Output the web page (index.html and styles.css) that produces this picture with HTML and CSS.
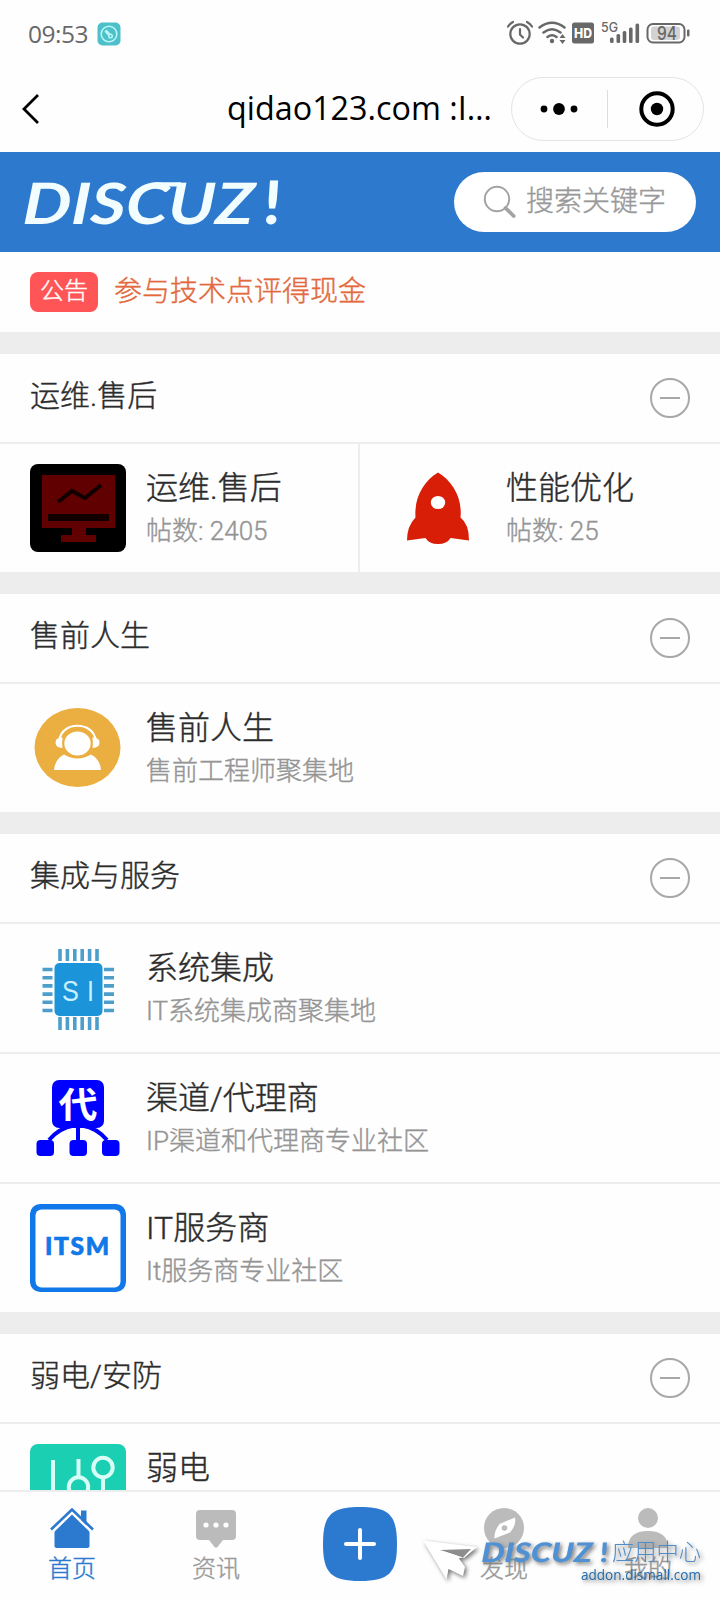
FILE: index.html
```html
<!DOCTYPE html>
<html lang="zh-CN">
<head>
<meta charset="utf-8">
<title>Discuz!</title>
<link rel="stylesheet" href="styles.css">
</head>
<body>
<div class="screen">
  <div class="status">
    <span class="clock">09:53</span>
    <svg class="app-dot" width="24" height="24" viewBox="0 0 24 24"><rect x=".5" y=".5" width="23" height="23" rx="5" fill="#4dc0ca"/><circle cx="12" cy="12" r="7.800" fill="none" stroke="#b9f6f8" stroke-width="1.600"/><path d="M8.500 8.500l4 4.500" stroke="#b9f6f8" stroke-width="3"/><circle cx="13.500" cy="14" r="1.800" fill="none" stroke="#b9f6f8" stroke-width="1.500"/></svg>
    <svg class="status-icons" width="190" height="28" viewBox="504 20 190 28">
      <g fill="none" stroke="#686868" stroke-width="2.200" stroke-linecap="round">
        <circle cx="520" cy="34" r="9.700"/><path d="M520 29v5.500l3 3M508 26.500q2-3 5-4.500M532 26.500q-2-3-5-4.500"/>
        <path d="M539.500 27.500q12.500-9.500 25 0M543.500 32.500q8.500-6.500 17 0M547.500 37q4.500-3.500 9 0" stroke-width="2.500"/>
        <rect x="647.500" y="24" width="37" height="18.500" rx="5.500" stroke-width="2"/>
      </g>
      <g fill="#686868">
        <circle cx="552" cy="41" r="2.200"/><path d="M559.500 38l3-4 3 4zM559.500 40l3 4 3-4z"/>
        <rect x="572" y="22.500" width="22" height="21" rx="2.500"/>
        <rect x="610" y="37.500" width="3.600" height="5.500" rx="1.500"/><rect x="616.500" y="34" width="3.600" height="9" rx="1.500"/><rect x="622.700" y="31" width="3.600" height="12" rx="1.500"/><rect x="629" y="27.500" width="3.600" height="15.500" rx="1.500"/><rect x="635.500" y="23.500" width="3.600" height="19.500" rx="1.500"/>
        <rect x="687" y="29.500" width="2.500" height="7" rx="1"/>
      </g>
      <rect x="651" y="26.500" width="29" height="13.500" rx="3" fill="#d2d2d2"/>
      <text class="st hd" x="574" y="38" textLength="18" lengthAdjust="spacingAndGlyphs">HD</text>
      <text class="st g5" x="601" y="31.500" textLength="17" lengthAdjust="spacingAndGlyphs">5G</text>
      <text class="st bat" x="657" y="39.500" textLength="20" lengthAdjust="spacingAndGlyphs">94</text>
    </svg>
  </div>
  <div class="nav">
    <svg class="back" width="20" height="34" viewBox="0 0 20 34"><path d="M17 3L3 17l14 14" fill="none" stroke="#000" stroke-width="2.800"/></svg>
    <svg class="nav-title" width="276" height="50" viewBox="222 84 276 50"><text x="227" y="120" textLength="265" lengthAdjust="spacingAndGlyphs">qidao123.com :I…</text></svg>
    <div class="capsule">
      <svg width="38" height="12" viewBox="0 0 38 12"><circle cx="4" cy="6" r="3.400"/><circle cx="19" cy="6" r="5.900"/><circle cx="34" cy="6" r="3.400"/></svg>
      <i></i>
      <svg width="36" height="36" viewBox="0 0 36 36"><circle cx="18" cy="18" r="15.700" fill="none" stroke="#000" stroke-width="4"/><circle cx="18" cy="18" r="6.200"/></svg>
    </div>
  </div>
  <div class="header">
    <svg class="brand" width="270" height="72" viewBox="16 168 270 72"><text class="logo" transform="translate(22 223.500) skewX(-3)" textLength="231" lengthAdjust="spacingAndGlyphs">DISCUZ</text><path d="M155 182.300h26l-1.500 4.200h-25z" fill="#f2fdff"/><text class="bang" transform="translate(262 223.500) skewX(-4)" textLength="18" lengthAdjust="spacingAndGlyphs">!</text></svg>
    <div class="search">
      <svg width="34" height="34" viewBox="0 0 34 34" fill="none" stroke="#a3a3a3"><circle cx="14" cy="14" r="12.200" stroke-width="2"/><path d="M22.500 23l8.200 8" stroke-width="3.800" stroke-linecap="round"/></svg>
      <span>搜索关键字</span>
    </div>
  </div>
  <div class="notice"><span class="badge">公告</span><span class="notice-text">参与技术点评得现金</span></div>

  <div class="forums">
    <section>
      <div class="head"><span>运维.售后</span><i class="fold"></i></div>
      <div class="row split">
        <div class="cell">
          <svg class="icon" viewBox="0 0 96 88"><rect width="96" height="88" fill="#000"/><path d="M12 11h73v53H12zM42 64h14v7h10v7H31v-7h11z" fill="#600000"/><path d="M18 50h61v7H18z" fill="#120000"/><path d="M28 38l14-11 13 7 16-13" fill="none" stroke="#120000" stroke-width="4"/></svg>
          <div class="info"><b>运维.售后</b><small>帖数: 2405</small></div>
        </div>
        <div class="cell">
          <svg class="icon" viewBox="0 0 96 88"><path d="M48 8.500C62 17 72.500 33 70.500 53.500Q79 60 79 76.500L60.500 74Q57 80 48 80t-12.500-6L17 76.500Q17 62 25.500 53.500C24 33 34 17 48 8.500z" fill="#d81e06"/><ellipse cx="48" cy="38.500" rx="7.200" ry="6.600" fill="#fff"/></svg>
          <div class="info"><b>性能优化</b><small>帖数: 25</small></div>
        </div>
      </div>
    </section>
    <section>
      <div class="head"><span>售前人生</span><i class="fold"></i></div>
      <div class="row"><div class="cell">
        <svg class="icon" viewBox="0 0 96 88"><ellipse cx="47.500" cy="43.500" rx="43" ry="39.500" fill="#ebae40"/><path d="M29.500 36c2-19 34-19 36 0" fill="none" stroke="#fff" stroke-width="2.200"/><path d="M32.500 33.500v10.500q-7-.5-7-5.500t7-5zM62.500 33.500v10.500q7-.5 7-5.500t-7-5zM24 66q1-11 10-15.500 13.500 8 27 0Q70 55 71 66z" fill="#fff"/><ellipse cx="47.500" cy="39.500" rx="14.200" ry="13" fill="#fff" stroke="#ebae40" stroke-width="2"/></svg>
        <div class="info"><b>售前人生</b><small>售前工程师聚集地</small></div>
      </div></div>
    </section>
    <section>
      <div class="head"><span>集成与服务</span><i class="fold"></i></div>
      <div class="row"><div class="cell">
        <svg class="icon" viewBox="0 0 96 88"><path d="M30 5v12M37.400 5v12M44.800 5v12M52.200 5v12M59.600 5v12M67 5v12M30 73v13M37.400 73v13M44.800 73v13M52.200 73v13M59.600 73v13M67 73v13M12.500 25.500h10M12.500 33.700h10M12.500 41.900h10M12.500 50.100h10M12.500 58.300h10M12.500 66.500h10M74 25.500h10M74 33.700h10M74 41.900h10M74 50.100h10M74 58.300h10M74 66.500h10" stroke="#4c9fcb" stroke-width="3.600"/><rect x="24.500" y="19" width="48" height="53" rx="5" fill="#1b94d9"/><text class="si" transform="translate(32 56.500) scale(.9 1.080)">S</text><text class="si" transform="translate(57 56.500) scale(.9 1.080)">I</text></svg>
        <div class="info"><b>系统集成</b><small>IT系统集成商聚集地</small></div>
      </div></div>
      <div class="row"><div class="cell">
        <svg class="icon" viewBox="0 0 96 88"><path d="M48 50v16M19 66q10-12 25-14.500M77 66Q67 54 52 51.500" fill="none" stroke="#0000fe" stroke-width="4"/><g fill="#0000fe"><rect x="22" y="6" width="52" height="48" rx="7"/><rect x="6.500" y="66" width="17.500" height="16" rx="4"/><rect x="39.500" y="66" width="17.500" height="16" rx="4"/><rect x="72" y="66" width="17.500" height="16" rx="4"/></g><text class="dai" transform="translate(28.500 43.500) scale(1 .92)">代</text></svg>
        <div class="info"><b>渠道/代理商</b><small>IP渠道和代理商专业社区</small></div>
      </div></div>
      <div class="row"><div class="cell">
        <svg class="icon" viewBox="0 0 96 88"><rect width="96" height="88" rx="10" fill="#1078e8"/><rect x="5.500" y="5.500" width="85" height="78" rx="6" fill="#fff"/><text class="itsm" x="15" y="51" textLength="64" lengthAdjust="spacing">ITSM</text></svg>
        <div class="info"><b>IT服务商</b><small>It服务商专业社区</small></div>
      </div></div>
    </section>
    <section>
      <div class="head"><span>弱电/安防</span><i class="fold"></i></div>
      <div class="row"><div class="cell">
        <svg class="icon" viewBox="0 0 96 88"><rect width="96" height="88" fill="#1bcfb2"/><g fill="none" stroke="#d8fff6" stroke-width="4"><path d="M23 16v60M48.500 15v18M73 33v50"/><circle cx="48.500" cy="43" r="9.700"/><circle cx="73" cy="23.500" r="9.700"/></g></svg>
        <div class="info single"><b>弱电</b></div>
      </div></div>
    </section>
  </div>

  <div class="tabs">
    <div class="tab on"><svg width="44" height="40" viewBox="0 0 44 40"><path d="M31 2.500h5.500v15L31 12z" fill="#2c79d0"/><path d="M1 21.500L22 1.500l21 20" fill="none" stroke="#2c79d0" stroke-width="2.600"/><path d="M4.500 23L22 6l17.500 17v15q0 2-3 2h-29q-3 0-3-2z" fill="#2c79d0"/><path d="M2.500 24.500L22 5.500l19.500 19" fill="none" stroke="#fff" stroke-width="1.500"/></svg><span>首页</span></div>
    <div class="tab"><svg width="44" height="40" viewBox="0 0 44 40"><path d="M6 2h32q4 0 4 4v22q0 4-4 4h-9l-5.500 7q-1.500 1.500-3 0L15 32H6q-4 0-4-4V6q0-4 4-4z" fill="#bbb"/><g fill="#fff"><circle cx="12" cy="17" r="2.600"/><circle cx="22" cy="17" r="2.600"/><circle cx="32" cy="17" r="2.600"/></g></svg><span>资讯</span></div>
    <div class="tab"><svg class="plus" width="76" height="76" viewBox="0 0 76 76"><path d="M38 1c29 0 37 8 37 37s-8 37-37 37S1 67 1 38 9 1 38 1z" fill="#2c79d0"/><path d="M24 38h28M38 24v28" stroke="#fff" stroke-width="4" stroke-linecap="round"/></svg></div>
    <div class="tab"><svg width="44" height="40" viewBox="0 0 44 40"><circle cx="22" cy="20" r="20" fill="#bbb"/><path d="M33 9.500q1.500 8-5 15L12.500 30.500Q12 23 17.500 16z" fill="#fff"/><circle cx="22.500" cy="20" r="2.800" fill="#bbb"/></svg><span>发现</span></div>
    <div class="tab"><svg width="44" height="40" viewBox="0 0 44 40"><circle cx="22" cy="10" r="10" fill="#bbb"/><path d="M2 40q0-17 20-17t20 17z" fill="#bbb"/></svg><span>我的</span></div>
    <svg class="mark" width="300" height="60" viewBox="420 1534 300 60">
      <g class="shade"><path d="M423 1540.500l54 6.500-13 11-7.500-3L465 1567l-2 9-14.500-7-2 10.500z" fill="#fff"/><path d="M440 1550l31-1-8 8.500z" fill="#8d8d8d"/><path d="M440 1550l23 7.500-5 1z" fill="#fff"/></g>
      <g class="shade"><text class="mark-logo" transform="translate(481 1562) skewX(-3)" textLength="111" lengthAdjust="spacingAndGlyphs">DISCUZ</text><text class="mark-bang" transform="translate(599 1562) skewX(-4)" textLength="9" lengthAdjust="spacingAndGlyphs">!</text>
      <text class="mark-cn" x="612" y="1560" textLength="89" lengthAdjust="spacingAndGlyphs">应用中心</text>
      <text class="mark-url" x="581" y="1580" textLength="120" lengthAdjust="spacingAndGlyphs">addon.dismall.com</text></g>
    </svg>
  </div>
</div>
</body>
</html>
```

FILE: styles.css
```css
* { box-sizing: border-box; }
body { margin: 0; background: #fff; font-family: Roboto, "Noto Sans CJK SC", sans-serif; font-weight: 300; color: #2c2c2c; -webkit-text-stroke: .4px; }
svg { display: block; flex: none; }
svg text { -webkit-text-stroke: 0; }
.screen { width: 720px; height: 1600px; display: flex; flex-direction: column; overflow: hidden; background: #fefefe; }
.status { height: 66px; flex: none; display: flex; align-items: center; padding: 2px 26px 0 28px; }
.clock { font-family: "Open Sans", sans-serif; font-weight: 400; font-size: 24.5px; line-height: 30px; width: 69px; padding-bottom: 1px; color: #686868; letter-spacing: -.5px; -webkit-text-stroke: 0; }
.status-icons { margin-left: auto; }
.st { font-family: Inter, sans-serif; fill: #686868; }
.hd { font-size: 13px; font-weight: 800; fill: #fff; }
.g5 { font-size: 13px; font-weight: 500; }
.bat { font-size: 18px; font-weight: 500; }
.nav { height: 86px; flex: none; display: flex; align-items: center; padding: 0 16px 1px 21px; }
.nav-title { margin-left: 181px; }
.nav-title text { font-family: "Open Sans", sans-serif; font-size: 32px; font-weight: 400; fill: #000; }
.capsule { margin-left: auto; width: 193px; height: 64px; border: 1px solid #e4e4e4; border-radius: 32px; display: flex; align-items: center; padding: 0 27px 0 28px; }
.capsule i { width: 1px; height: 38px; background: #ddd; margin: 0 31px 0 29px; }
.header { height: 100px; flex: none; background: #2c79ce; display: flex; align-items: center; padding: 4px 24px 0 16px; }
.brand { overflow: visible; }
.logo, .bang { font-family: Lato, sans-serif; font-style: italic; font-weight: 700; font-size: 57px; fill: #f2fdff; }
.bang { font-style: normal; font-weight: 900; font-size: 60px; }
.search { margin-left: auto; margin-bottom: 4px; width: 242px; height: 60px; border-radius: 30px; background: #fff; display: flex; align-items: center; padding-left: 29px; gap: 9px; font-size: 28px; color: #999; }
.search span { line-height: 40px; }
.notice { height: 80px; flex: none; display: flex; align-items: center; padding-left: 30px; gap: 16px; }
.badge { width: 68px; height: 40px; border-radius: 8px; background: #ff5556; color: #fff; font-size: 24px; line-height: 38px; text-align: center; }
.notice-text { font-size: 28px; line-height: 40px; color: #e3693c; }
.forums { flex: 1; min-height: 0; overflow: hidden; }
section { border-top: 22px solid #ededed; }
.head { height: 88px; display: flex; align-items: center; justify-content: space-between; padding: 0 30px; font-size: 30px; }
.head span { line-height: 44px; padding-bottom: 5px; }
.fold { width: 40px; height: 40px; border: 2px solid #a8a8a8; border-radius: 50%; display: flex; align-items: center; justify-content: center; }
.fold::after { content: ""; width: 20px; height: 2px; background: #a8a8a8; }
.row { height: 130px; border-top: 2px solid #ededed; display: flex; }
.cell { flex: 1; display: flex; align-items: center; padding-left: 30px; gap: 20px; }
.split .cell + .cell { border-left: 2px solid #ededed; }
.split .cell:first-child { flex: 0 0 358px; }
.icon { width: 96px; height: 88px; border-radius: 8px; overflow: hidden; }
.info { display: flex; flex-direction: column; padding-top: 1px; }
.info.single { padding-bottom: 42px; }
.info b { font-weight: 300; font-size: 32px; line-height: 44px; }
.info small { font-size: 26px; line-height: 42px; color: #959595; }
.si { font-family: "Liberation Sans", sans-serif; font-size: 28px; fill: #c9f0ff; }
.dai { font-family: "Noto Sans CJK SC", sans-serif; font-weight: 700; font-size: 39px; fill: #fff; }
.itsm { font-family: Lato, sans-serif; font-weight: 900; font-size: 24.5px; fill: #1078e8; stroke: #1078e8; stroke-width: .7px; }
.tabs { position: relative; height: 110px; flex: none; border-top: 2px solid #ededed; display: flex; }
.tab { flex: 1; display: flex; flex-direction: column; align-items: center; padding-top: 16px; gap: 3px; font-size: 24px; line-height: 37px; color: #999; }
.tab.on { color: #2c79d0; }
.plus { margin-top: -2px; }
.mark { position: absolute; left: 420px; top: 42px; }
.shade { filter: drop-shadow(2px 2px 2px #777); }
.mark-logo, .mark-bang { font-family: Lato, sans-serif; font-style: italic; font-size: 27px; font-weight: 900; fill: #4f91d2; }
.mark-bang { font-style: normal; }
.mark-cn { font-family: "Noto Sans CJK SC", sans-serif; font-size: 23px; fill: #4f8cc8; }
.mark-url { font-family: "Open Sans", sans-serif; font-size: 15px; font-weight: 400; fill: #236cac; }
```
